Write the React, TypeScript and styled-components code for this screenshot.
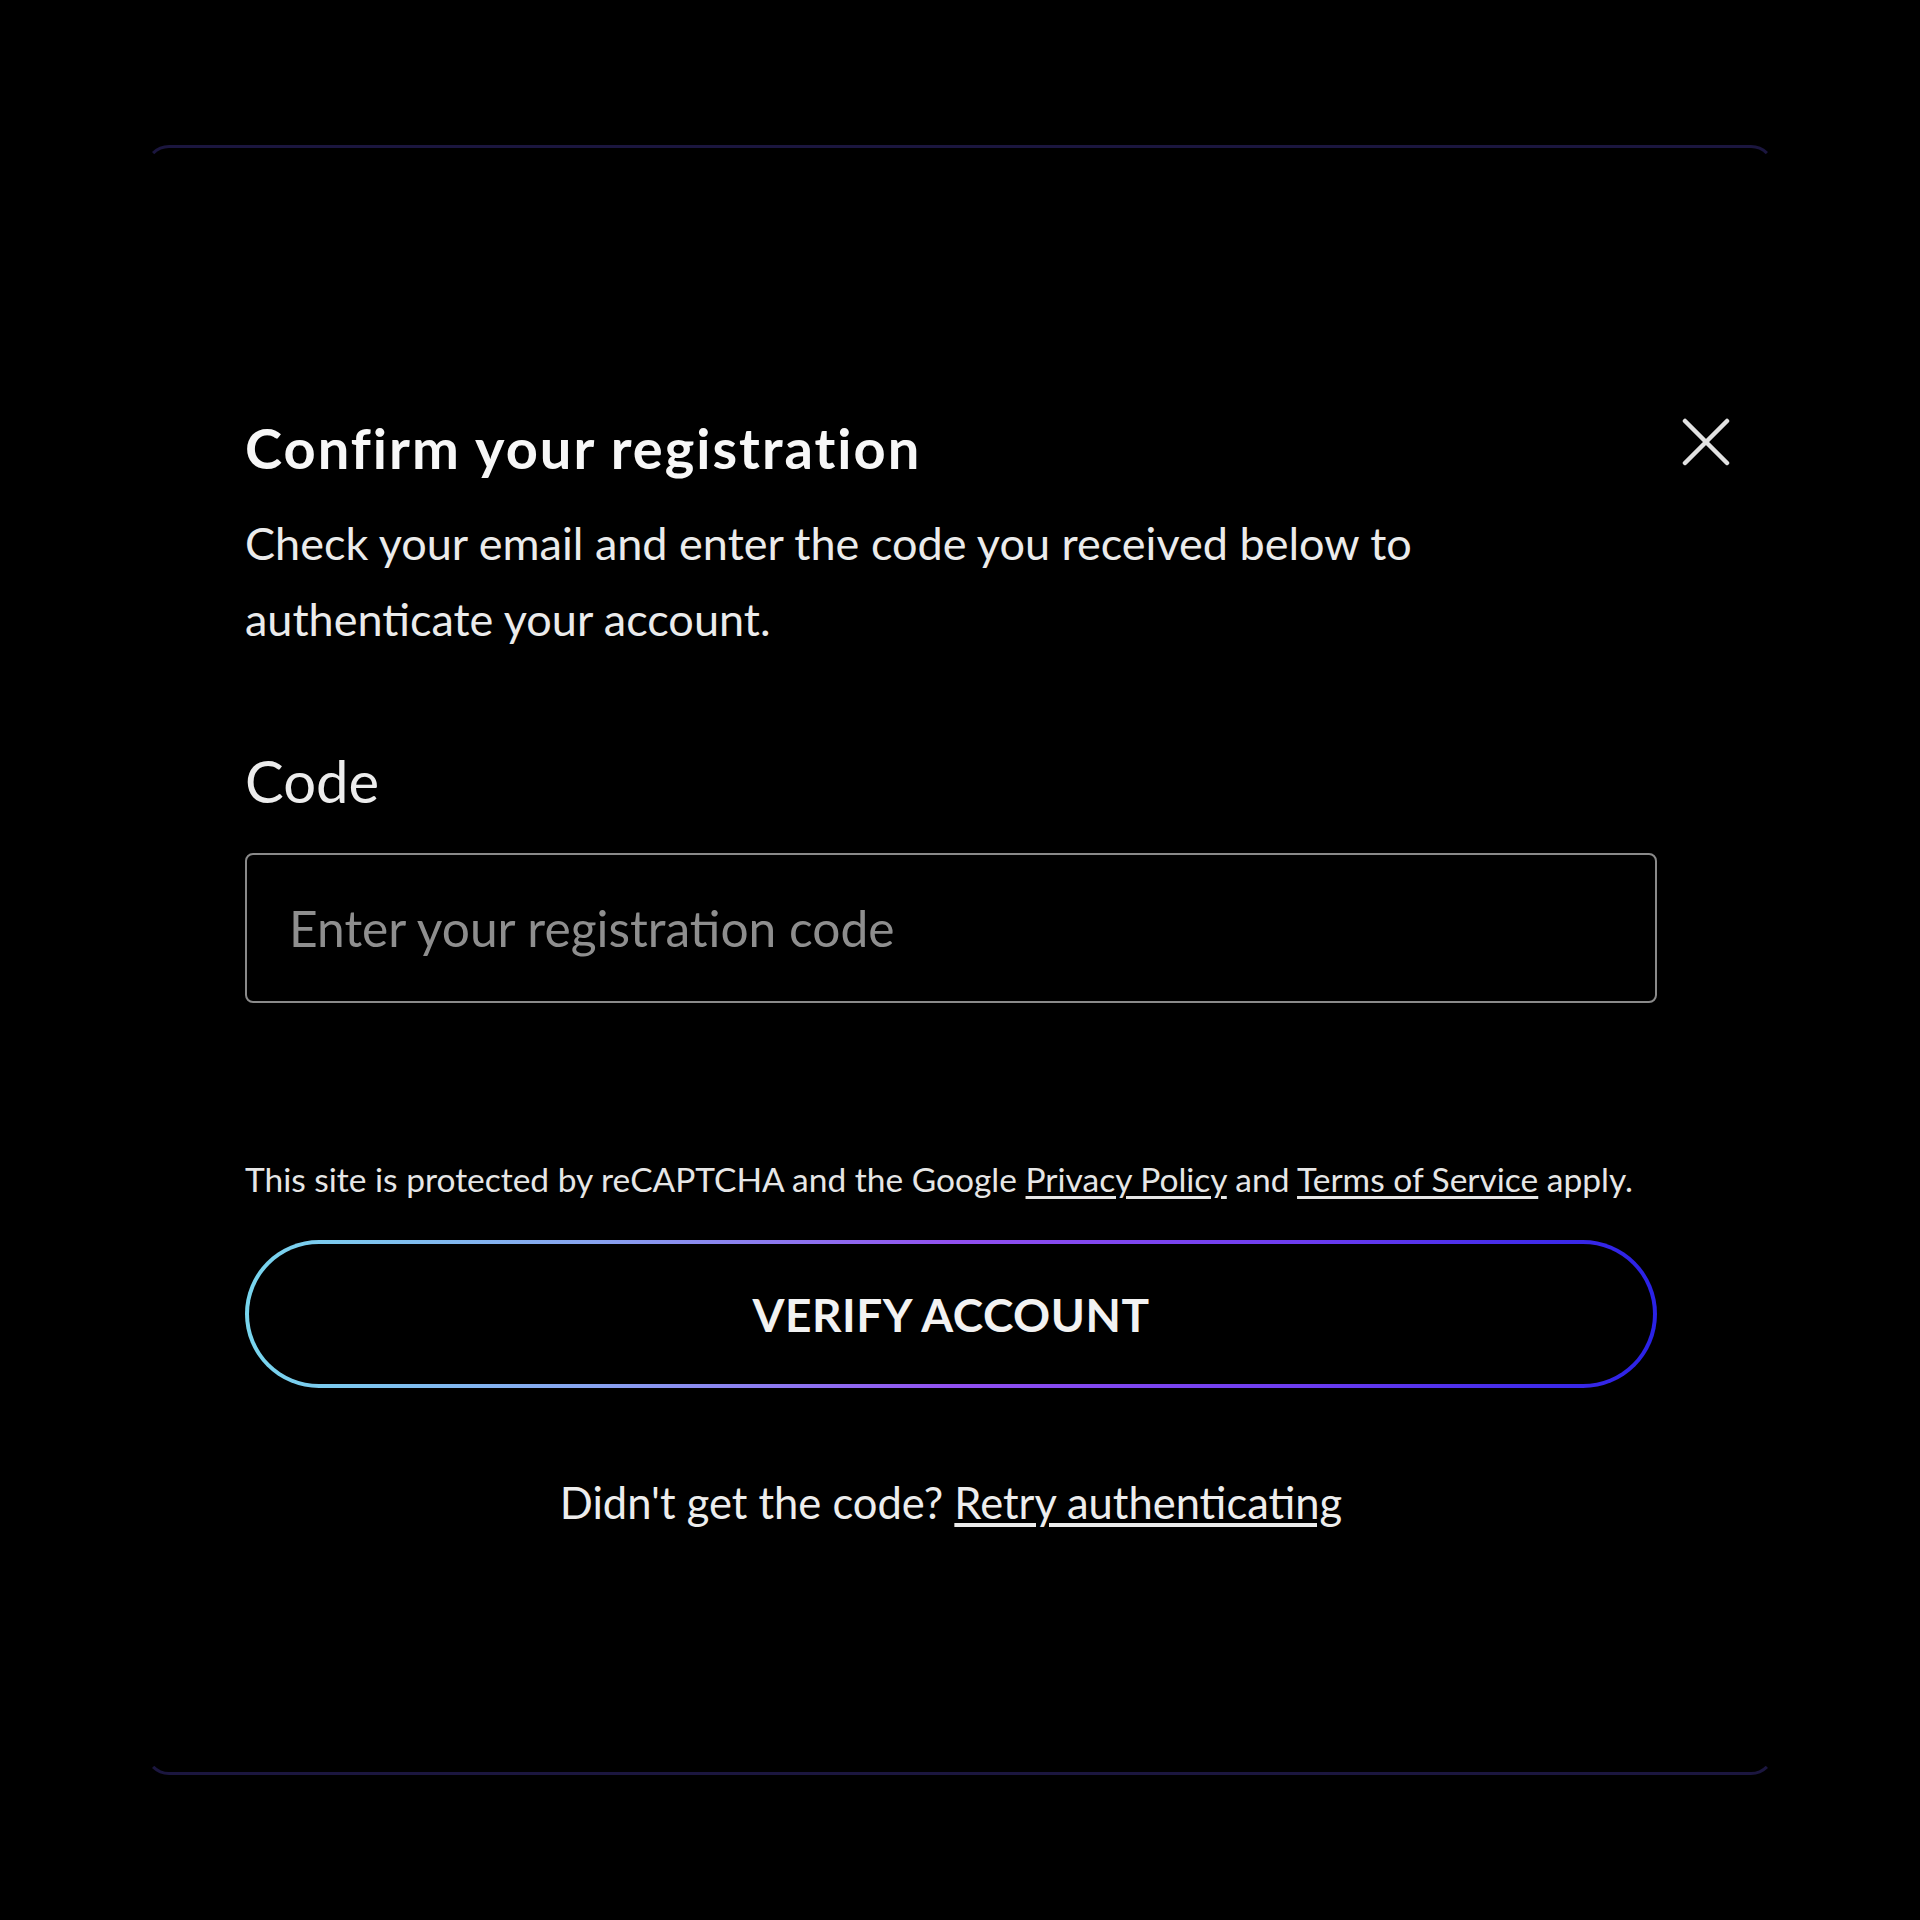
import React from 'react';
import styled, { createGlobalStyle } from 'styled-components';

const GlobalStyle = createGlobalStyle`
    html, body {
        margin: 0;
        padding: 0;
        background: #000;
    }
    body {
        font-family: Lato, "Liberation Sans", sans-serif;
        color: #eeeeee;
    }
`;

const Page = styled.div`
    width: 1920px;
    height: 1920px;
    display: flex;
    align-items: center;
    justify-content: center;
    background: #000;
`;

const Modal = styled.div`
    box-sizing: border-box;
    width: 1630px;
    height: 1630px;
    padding: 270px 42px 0 97px;
    border: 3px solid;
    border-color: #1b163f transparent;
    border-radius: 24px;
    background: #000;
`;

const Header = styled.div`
    display: flex;
    justify-content: space-between;
    align-items: center;
`;

const Title = styled.h2`
    margin: 0;
    font-size: 56px;
    line-height: 60px;
    font-weight: 700;
    letter-spacing: 2px;
    color: #f7f7f7;
`;

const CloseButton = styled.button`
    width: 48px;
    height: 48px;
    padding: 0;
    margin-top: -12px;
    border: none;
    background: transparent;
    color: #e2e2e2;
    cursor: pointer;
`;

const Form = styled.div`
    width: 1412px;
`;

const Description = styled.p`
    margin: 27px 0 0;
    font-size: 45px;
    line-height: 76px;
    color: #ebebeb;
`;

const Label = styled.label`
    display: block;
    margin-top: 89px;
    font-size: 58px;
    line-height: 70px;
    color: #ececec;
`;

const Input = styled.input`
    box-sizing: border-box;
    display: block;
    width: 100%;
    height: 150px;
    margin-top: 37px;
    padding: 0 42px;
    border: 2px solid #8a8a8a;
    border-radius: 8px;
    background: #000;
    color: #eee;
    font-family: inherit;
    font-size: 49.7px;
    outline: none;

    &::placeholder {
        color: #8e8e8e;
    }
`;

const Notice = styled.p`
    margin: 156px 0 0;
    font-size: 33.5px;
    line-height: 40px;
    color: #e6e6e6;
    white-space: nowrap;
`;

const Link = styled.a`
    color: inherit;
    text-decoration: underline;
    text-underline-offset: 4px;
    cursor: pointer;
`;

const VerifyButton = styled.button`
    box-sizing: border-box;
    display: block;
    width: 100%;
    height: 148px;
    margin-top: 41px;
    border: 4px solid transparent;
    border-radius: 999px;
    background:
        linear-gradient(#000, #000) padding-box,
        linear-gradient(90deg, #78d6ee 0%, #88a2f0 25%, #9150f0 50%, #6c3cf0 75%, #2a22e6 100%) border-box;
    color: #f2f2f2;
    font-family: inherit;
    font-size: 46px;
    font-weight: 700;
    letter-spacing: 0.5px;
    cursor: pointer;
`;

const Footer = styled.p`
    margin: 86px 0 0;
    text-align: center;
    font-size: 43.5px;
    line-height: 56px;
    color: #ededed;
`;

const App: React.FC = () => {
    return (
        <Page>
            <GlobalStyle />
            <Modal>
                <Header>
                    <Title>Confirm your registration</Title>
                    <CloseButton aria-label="Close">
                        <svg width="48" height="48" viewBox="0 0 48 48" fill="none">
                            <path d="M3 3 L45 45 M45 3 L3 45" stroke="currentColor" strokeWidth="4.5" strokeLinecap="round" />
                        </svg>
                    </CloseButton>
                </Header>
                <Form>
                    <Description>
                        Check your email and enter the code you received below to<br />
                        authenticate your account.
                    </Description>
                    <Label htmlFor="code">Code</Label>
                    <Input id="code" placeholder="Enter your registration code" />
                    <Notice>
                        This site is protected by reCAPTCHA and the Google <Link>Privacy Policy</Link> and{' '}
                        <Link>Terms of Service</Link> apply.
                    </Notice>
                    <VerifyButton>VERIFY ACCOUNT</VerifyButton>
                    <Footer>
                        Didn't get the code? <Link>Retry authenticating</Link>
                    </Footer>
                </Form>
            </Modal>
        </Page>
    );
};

export default App;
